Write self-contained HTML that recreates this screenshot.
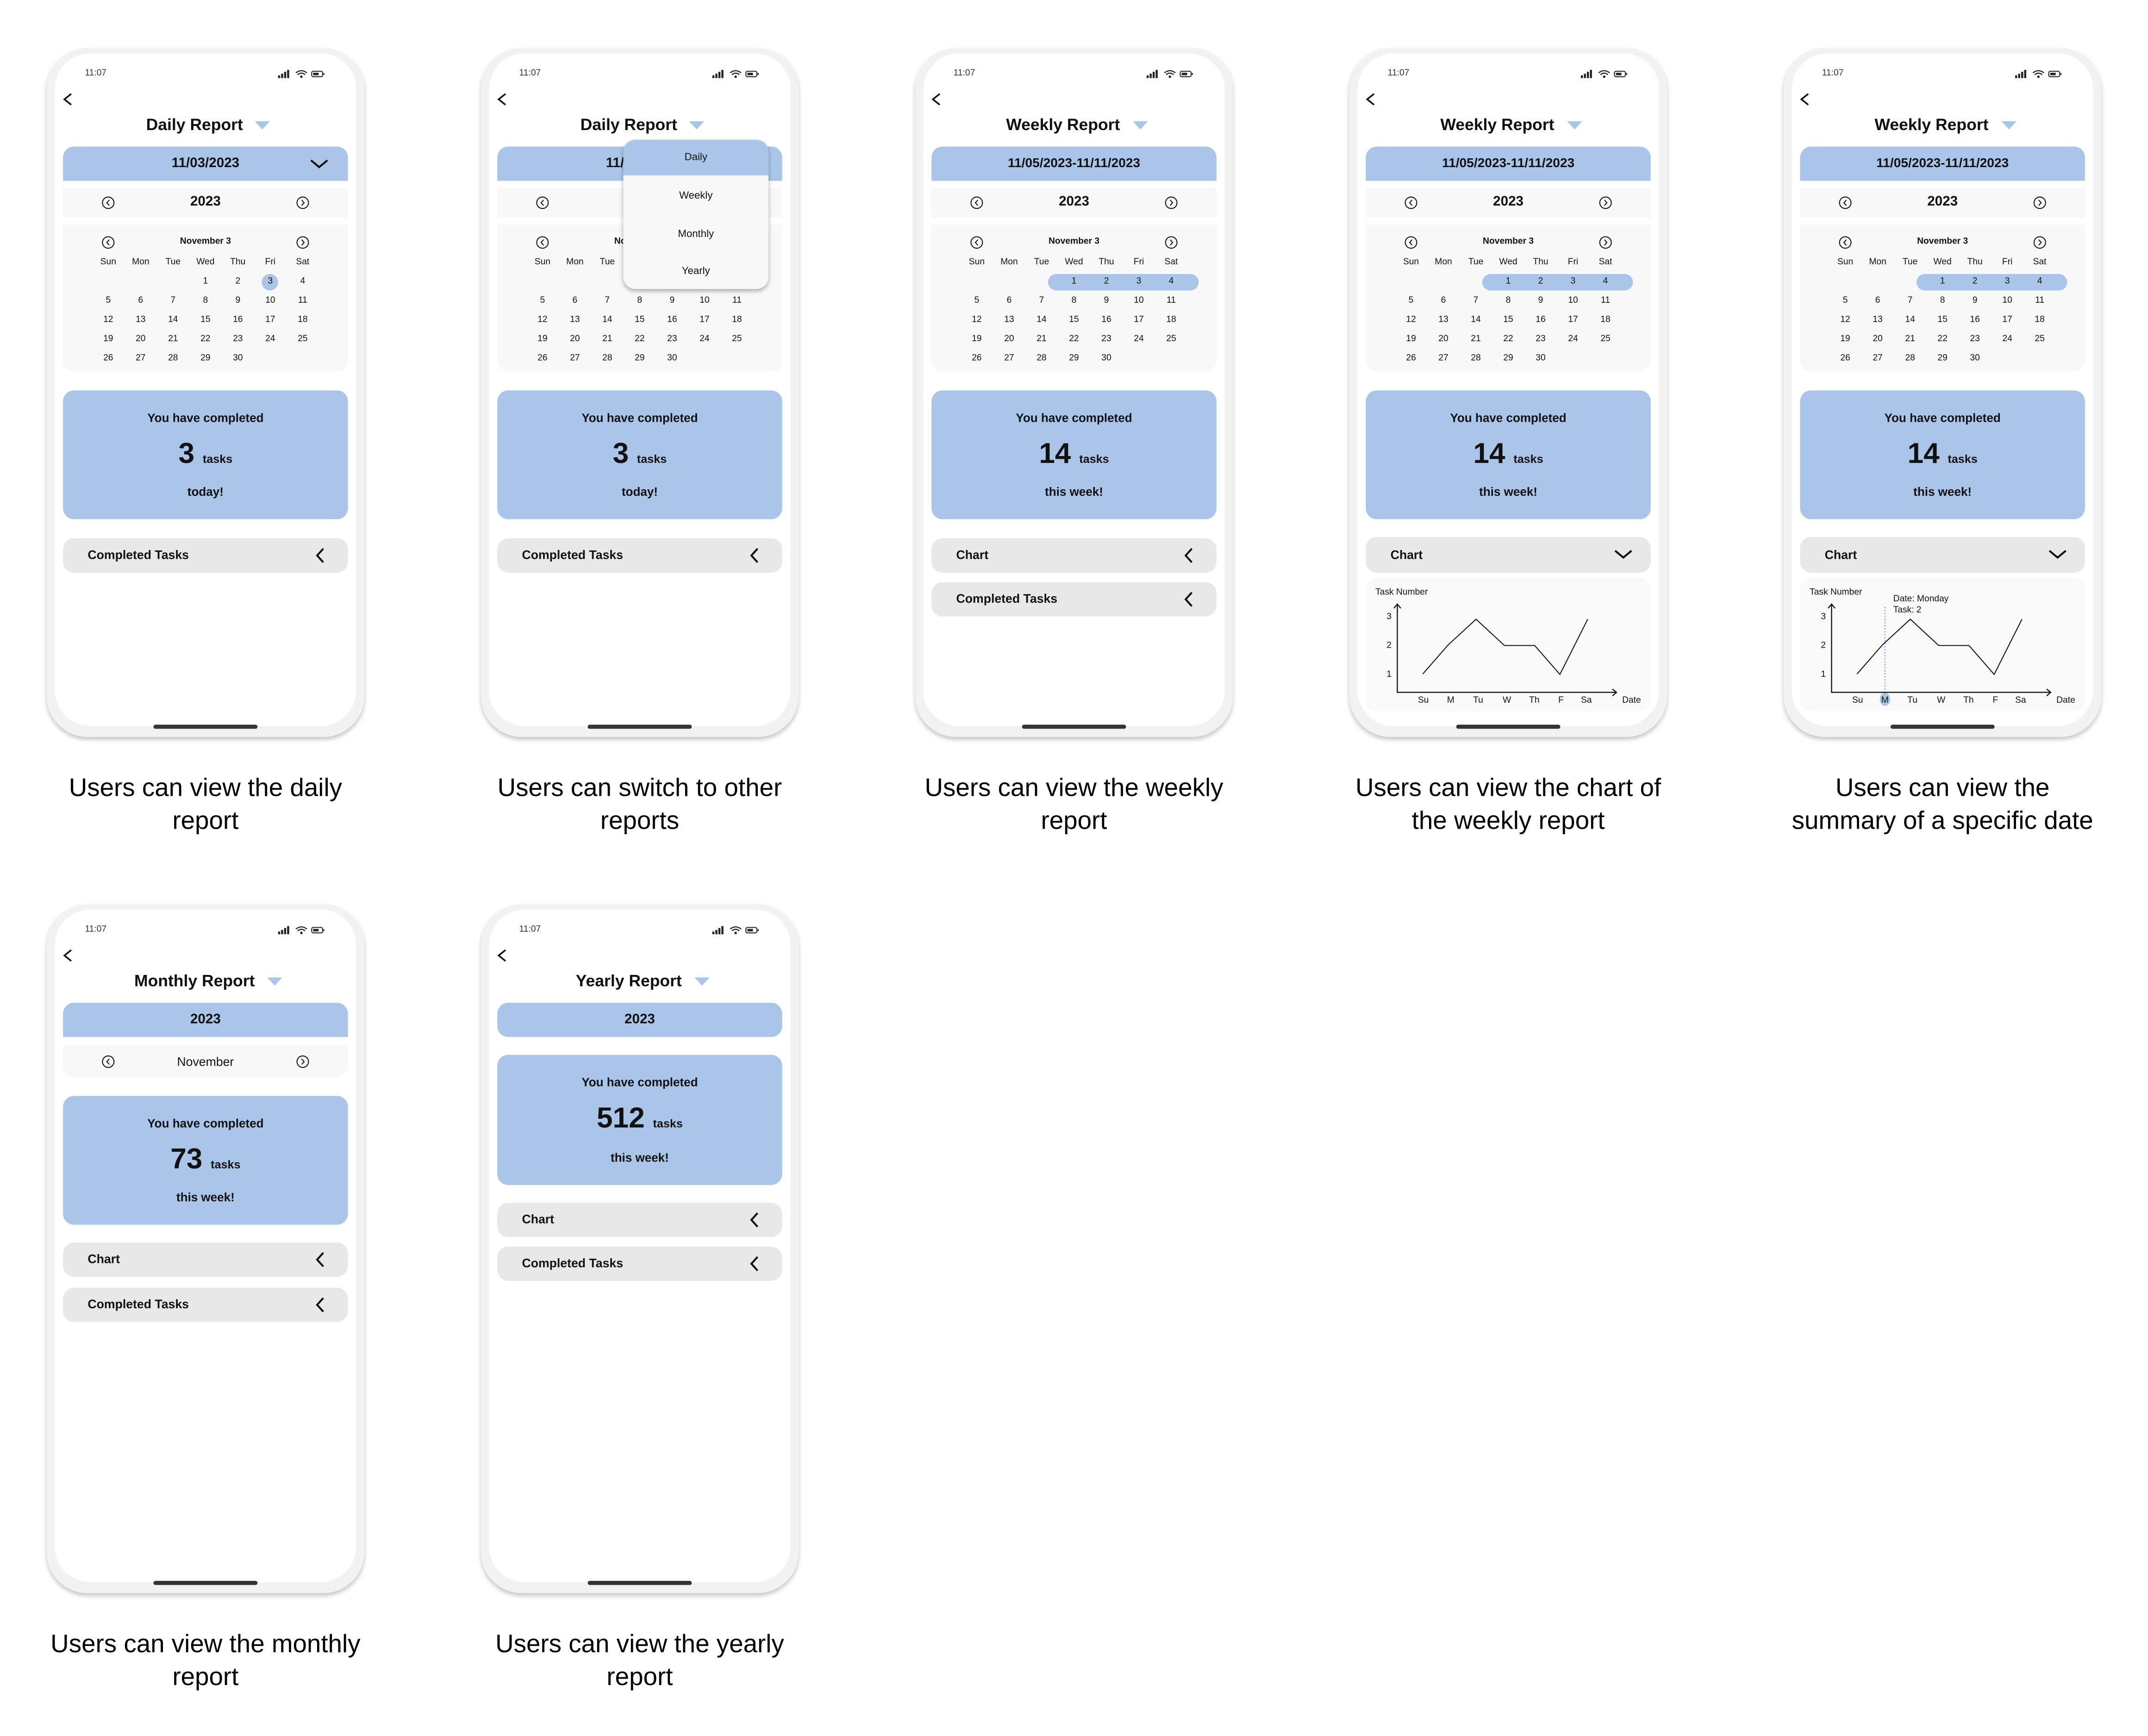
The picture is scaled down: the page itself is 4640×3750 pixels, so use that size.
<!DOCTYPE html>
<html><head><meta charset="utf-8"><style>
html,body{margin:0;padding:0;background:#fff;}
body{width:4640px;height:3750px;overflow:hidden;position:relative;}
#w{position:absolute;left:0;top:0;width:1568px;height:1267px;transform:scale(2.9592);transform-origin:0 0;font-family:"Liberation Sans",Arial,sans-serif;color:#111;}
.ph{position:absolute;width:232px;height:503px;border-radius:30px;background:#f2f2f2;box-shadow:0 2px 3px rgba(0,0,0,.22);}
.scr{position:absolute;left:6px;top:4px;right:6px;bottom:8px;background:#fff;border-radius:26px;}
.ph>*{position:absolute;}
.time{left:28px;top:15px;font-size:6.5px;line-height:8px;color:#333;}
.home{left:78px;top:494px;width:76px;height:3px;border-radius:2px;background:#333;}
.title{left:0;width:236px;top:49px;height:14px;display:flex;justify-content:center;align-items:center;font-weight:bold;font-size:12px;}
.title svg{margin-left:9px;}
.bar{left:12px;width:208px;background:#a9c6e8;text-align:center;font-weight:bold;}
.yr{left:12px;width:208px;top:102px;height:22px;background:#f8f8f8;line-height:22px;text-align:center;font-weight:bold;font-size:10px;}
.cal{left:12px;width:208px;top:129px;height:107px;background:#f8f8f8;border-radius:0 0 8px 8px;}
.cal>*{position:absolute;}
.mt{left:0;width:208px;top:9px;line-height:8px;text-align:center;font-weight:bold;font-size:6.5px;}
.r{left:21.2px;top:0;display:flex;font-size:6.5px;line-height:10px;}
.r span{width:23.67px;text-align:center;display:block;}
.sum{left:12px;width:208px;height:94px;background:#a9c6e8;border-radius:8px;}
.sum>*{position:absolute;left:0;width:208px;text-align:center;font-weight:bold;}
.s1{font-size:8.8px;line-height:10px;}
.s2{font-size:21px;line-height:24px;font-weight:900 !important;}
.s2 small{font-size:8.5px;font-weight:bold;margin-left:6px;}
.gb{left:12px;width:208px;height:25px;background:#e8e8e8;border-radius:8px;font-weight:bold;font-size:9px;line-height:25px;}
.gb span{position:absolute;left:18px;}
.gb svg{position:absolute;left:183px;top:6px;}
.cap{position:absolute;width:340px;text-align:center;font-size:18.5px;line-height:24px;color:#000;}
.dd{left:104px;top:67px;width:106px;height:109px;border-radius:9px;background:#f8f8f8;box-shadow:0 1.5px 3px rgba(0,0,0,.3);overflow:hidden;z-index:5;}
.dd div{position:absolute;left:0;width:106px;text-align:center;font-size:7.5px;background:#f8f8f8;}
.ci{width:10px;height:10px;}
</style></head><body><div id="w">

<!-- PHONE 1 -->
<div class="ph" style="left:34px;top:35px">
<div class="scr"></div>
<div class="time">11:07</div>
<svg style="left:168px;top:14px" width="38" height="10" viewBox="0 0 38 10"><rect x="1" y="6" width="1.5" height="2" fill="#222"/><rect x="3.2" y="4.8" width="1.5" height="3.2" fill="#222"/><rect x="5.4" y="3.4" width="1.5" height="4.6" fill="#222"/><rect x="7.6" y="2" width="1.5" height="6" fill="#222"/><path d="M14 4.2 Q18 1 22 4.2 M15.3 5.5 Q18 3.3 20.7 5.5" fill="none" stroke="#222" stroke-width=".8"/><circle cx="18" cy="7" r=".9" fill="#222"/><rect x="25.5" y="3" width="8" height="4" rx="1.2" fill="none" stroke="#222" stroke-width=".7"/><rect x="26.6" y="4.1" width="4" height="1.8" fill="#222"/><rect x="34" y="4.3" width=".8" height="1.4" fill="#222"/></svg>
<svg style="left:10px;top:32px" width="12" height="12"><path d="M8 1.5 L3 5.5 L8 9.5" fill="none" stroke="#111" stroke-width="1.2"/></svg>
<div class="title">Daily Report<svg width="11" height="7"><polygon points="0,0.5 11,0.5 5.5,6.5" fill="#a9c6e8"/></svg></div>
<div class="bar" style="top:72px;height:25px;line-height:26px;border-radius:8px 8px 0 0;font-size:10px">11/03/2023</div>
<svg style="left:192px;top:80px" width="14" height="9"><path d="M1 2 L7 7 L13 2" fill="none" stroke="#111" stroke-width="1.4"/></svg>
<div class="yr">2023</div>
<svg class="ci" style="left:40px;top:108px" viewBox="0 0 10 10"><circle cx="5" cy="5" r="4.2" fill="none" stroke="#111" stroke-width=".7"/><path d="M5.8 3 L4 5 L5.8 7" fill="none" stroke="#111" stroke-width=".7"/></svg>
<svg class="ci" style="left:182px;top:108px" viewBox="0 0 10 10"><circle cx="5" cy="5" r="4.2" fill="none" stroke="#111" stroke-width=".7"/><path d="M4.2 3 L6 5 L4.2 7" fill="none" stroke="#111" stroke-width=".7"/></svg>
<div class="cal">
<div style="left:145px;top:35.5px;width:12px;height:12px;border-radius:50%;background:#a9c6e8"></div>
<svg class="ci" style="left:28px;top:8px" viewBox="0 0 10 10"><circle cx="5" cy="5" r="4.2" fill="none" stroke="#111" stroke-width=".7"/><path d="M5.8 3 L4 5 L5.8 7" fill="none" stroke="#111" stroke-width=".7"/></svg>
<svg class="ci" style="left:170px;top:8px" viewBox="0 0 10 10"><circle cx="5" cy="5" r="4.2" fill="none" stroke="#111" stroke-width=".7"/><path d="M4.2 3 L6 5 L4.2 7" fill="none" stroke="#111" stroke-width=".7"/></svg>
<div class="mt">November 3</div>
<div class="r" style="top:23px"><span>Sun</span><span>Mon</span><span>Tue</span><span>Wed</span><span>Thu</span><span>Fri</span><span>Sat</span></div>
<div class="r" style="top:37px"><span></span><span></span><span></span><span>1</span><span>2</span><span>3</span><span>4</span></div>
<div class="r" style="top:51px"><span>5</span><span>6</span><span>7</span><span>8</span><span>9</span><span>10</span><span>11</span></div>
<div class="r" style="top:65px"><span>12</span><span>13</span><span>14</span><span>15</span><span>16</span><span>17</span><span>18</span></div>
<div class="r" style="top:79px"><span>19</span><span>20</span><span>21</span><span>22</span><span>23</span><span>24</span><span>25</span></div>
<div class="r" style="top:93px"><span>26</span><span>27</span><span>28</span><span>29</span><span>30</span></div>
</div>
<div class="sum" style="top:250px"><div class="s1" style="top:15px">You have completed</div><div class="s2" style="top:35px">3<small>tasks</small></div><div class="s1" style="top:69px">today!</div></div>
<div class="gb" style="top:358px"><span>Completed Tasks</span><svg width="10" height="13"><path d="M7 1.5 L2.5 6.5 L7 11.5" fill="none" stroke="#111" stroke-width="1.4"/></svg></div>
<div class="home"></div>
</div>

<!-- PHONE 2 -->
<div class="ph" style="left:351px;top:35px">
<div class="scr"></div>
<div class="time">11:07</div>
<svg style="left:168px;top:14px" width="38" height="10" viewBox="0 0 38 10"><rect x="1" y="6" width="1.5" height="2" fill="#222"/><rect x="3.2" y="4.8" width="1.5" height="3.2" fill="#222"/><rect x="5.4" y="3.4" width="1.5" height="4.6" fill="#222"/><rect x="7.6" y="2" width="1.5" height="6" fill="#222"/><path d="M14 4.2 Q18 1 22 4.2 M15.3 5.5 Q18 3.3 20.7 5.5" fill="none" stroke="#222" stroke-width=".8"/><circle cx="18" cy="7" r=".9" fill="#222"/><rect x="25.5" y="3" width="8" height="4" rx="1.2" fill="none" stroke="#222" stroke-width=".7"/><rect x="26.6" y="4.1" width="4" height="1.8" fill="#222"/><rect x="34" y="4.3" width=".8" height="1.4" fill="#222"/></svg>
<svg style="left:10px;top:32px" width="12" height="12"><path d="M8 1.5 L3 5.5 L8 9.5" fill="none" stroke="#111" stroke-width="1.2"/></svg>
<div class="title">Daily Report<svg width="11" height="7"><polygon points="0,0.5 11,0.5 5.5,6.5" fill="#a9c6e8"/></svg></div>
<div class="bar" style="top:72px;height:25px;line-height:26px;border-radius:8px 8px 0 0;font-size:10px">11/03/2023</div>
<div class="yr">2023</div>
<svg class="ci" style="left:40px;top:108px" viewBox="0 0 10 10"><circle cx="5" cy="5" r="4.2" fill="none" stroke="#111" stroke-width=".7"/><path d="M5.8 3 L4 5 L5.8 7" fill="none" stroke="#111" stroke-width=".7"/></svg>
<div class="cal">
<svg class="ci" style="left:28px;top:8px" viewBox="0 0 10 10"><circle cx="5" cy="5" r="4.2" fill="none" stroke="#111" stroke-width=".7"/><path d="M5.8 3 L4 5 L5.8 7" fill="none" stroke="#111" stroke-width=".7"/></svg>
<div class="mt">November 3</div>
<div class="r" style="top:23px"><span>Sun</span><span>Mon</span><span>Tue</span><span>Wed</span><span>Thu</span><span>Fri</span><span>Sat</span></div>
<div class="r" style="top:51px"><span>5</span><span>6</span><span>7</span><span>8</span><span>9</span><span>10</span><span>11</span></div>
<div class="r" style="top:65px"><span>12</span><span>13</span><span>14</span><span>15</span><span>16</span><span>17</span><span>18</span></div>
<div class="r" style="top:79px"><span>19</span><span>20</span><span>21</span><span>22</span><span>23</span><span>24</span><span>25</span></div>
<div class="r" style="top:93px"><span>26</span><span>27</span><span>28</span><span>29</span><span>30</span></div>
</div>
<div class="dd">
<div style="top:0;height:26px;line-height:26px;background:#a9c6e8">Daily</div>
<div style="top:27px;height:27px;line-height:27px">Weekly</div>
<div style="top:55px;height:27px;line-height:27px">Monthly</div>
<div style="top:83px;height:26px;line-height:26px">Yearly</div>
</div>
<div class="sum" style="top:250px"><div class="s1" style="top:15px">You have completed</div><div class="s2" style="top:35px">3<small>tasks</small></div><div class="s1" style="top:69px">today!</div></div>
<div class="gb" style="top:358px"><span>Completed Tasks</span><svg width="10" height="13"><path d="M7 1.5 L2.5 6.5 L7 11.5" fill="none" stroke="#111" stroke-width="1.4"/></svg></div>
<div class="home"></div>
</div>

<!-- PHONE 3 -->
<div class="ph" style="left:668px;top:35px">
<div class="scr"></div>
<div class="time">11:07</div>
<svg style="left:168px;top:14px" width="38" height="10" viewBox="0 0 38 10"><rect x="1" y="6" width="1.5" height="2" fill="#222"/><rect x="3.2" y="4.8" width="1.5" height="3.2" fill="#222"/><rect x="5.4" y="3.4" width="1.5" height="4.6" fill="#222"/><rect x="7.6" y="2" width="1.5" height="6" fill="#222"/><path d="M14 4.2 Q18 1 22 4.2 M15.3 5.5 Q18 3.3 20.7 5.5" fill="none" stroke="#222" stroke-width=".8"/><circle cx="18" cy="7" r=".9" fill="#222"/><rect x="25.5" y="3" width="8" height="4" rx="1.2" fill="none" stroke="#222" stroke-width=".7"/><rect x="26.6" y="4.1" width="4" height="1.8" fill="#222"/><rect x="34" y="4.3" width=".8" height="1.4" fill="#222"/></svg>
<svg style="left:10px;top:32px" width="12" height="12"><path d="M8 1.5 L3 5.5 L8 9.5" fill="none" stroke="#111" stroke-width="1.2"/></svg>
<div class="title">Weekly Report<svg width="11" height="7"><polygon points="0,0.5 11,0.5 5.5,6.5" fill="#a9c6e8"/></svg></div>
<div class="bar" style="top:72px;height:25px;line-height:26px;border-radius:8px 8px 0 0;font-size:9.5px">11/05/2023-11/11/2023</div>
<div class="yr">2023</div>
<svg class="ci" style="left:40px;top:108px" viewBox="0 0 10 10"><circle cx="5" cy="5" r="4.2" fill="none" stroke="#111" stroke-width=".7"/><path d="M5.8 3 L4 5 L5.8 7" fill="none" stroke="#111" stroke-width=".7"/></svg>
<svg class="ci" style="left:182px;top:108px" viewBox="0 0 10 10"><circle cx="5" cy="5" r="4.2" fill="none" stroke="#111" stroke-width=".7"/><path d="M4.2 3 L6 5 L4.2 7" fill="none" stroke="#111" stroke-width=".7"/></svg>
<div class="cal">
<div style="left:85px;top:35.5px;width:110px;height:12px;border-radius:6px;background:#a9c6e8"></div>
<svg class="ci" style="left:28px;top:8px" viewBox="0 0 10 10"><circle cx="5" cy="5" r="4.2" fill="none" stroke="#111" stroke-width=".7"/><path d="M5.8 3 L4 5 L5.8 7" fill="none" stroke="#111" stroke-width=".7"/></svg>
<svg class="ci" style="left:170px;top:8px" viewBox="0 0 10 10"><circle cx="5" cy="5" r="4.2" fill="none" stroke="#111" stroke-width=".7"/><path d="M4.2 3 L6 5 L4.2 7" fill="none" stroke="#111" stroke-width=".7"/></svg>
<div class="mt">November 3</div>
<div class="r" style="top:23px"><span>Sun</span><span>Mon</span><span>Tue</span><span>Wed</span><span>Thu</span><span>Fri</span><span>Sat</span></div>
<div class="r" style="top:37px"><span></span><span></span><span></span><span>1</span><span>2</span><span>3</span><span>4</span></div>
<div class="r" style="top:51px"><span>5</span><span>6</span><span>7</span><span>8</span><span>9</span><span>10</span><span>11</span></div>
<div class="r" style="top:65px"><span>12</span><span>13</span><span>14</span><span>15</span><span>16</span><span>17</span><span>18</span></div>
<div class="r" style="top:79px"><span>19</span><span>20</span><span>21</span><span>22</span><span>23</span><span>24</span><span>25</span></div>
<div class="r" style="top:93px"><span>26</span><span>27</span><span>28</span><span>29</span><span>30</span></div>
</div>
<div class="sum" style="top:250px"><div class="s1" style="top:15px">You have completed</div><div class="s2" style="top:35px">14<small>tasks</small></div><div class="s1" style="top:69px">this week!</div></div>
<div class="gb" style="top:358px"><span>Chart</span><svg width="10" height="13"><path d="M7 1.5 L2.5 6.5 L7 11.5" fill="none" stroke="#111" stroke-width="1.4"/></svg></div>
<div class="gb" style="top:390px"><span>Completed Tasks</span><svg width="10" height="13"><path d="M7 1.5 L2.5 6.5 L7 11.5" fill="none" stroke="#111" stroke-width="1.4"/></svg></div>
<div class="home"></div>
</div>

<!-- PHONE 4 -->
<div class="ph" style="left:985px;top:35px">
<div class="scr"></div>
<div class="time">11:07</div>
<svg style="left:168px;top:14px" width="38" height="10" viewBox="0 0 38 10"><rect x="1" y="6" width="1.5" height="2" fill="#222"/><rect x="3.2" y="4.8" width="1.5" height="3.2" fill="#222"/><rect x="5.4" y="3.4" width="1.5" height="4.6" fill="#222"/><rect x="7.6" y="2" width="1.5" height="6" fill="#222"/><path d="M14 4.2 Q18 1 22 4.2 M15.3 5.5 Q18 3.3 20.7 5.5" fill="none" stroke="#222" stroke-width=".8"/><circle cx="18" cy="7" r=".9" fill="#222"/><rect x="25.5" y="3" width="8" height="4" rx="1.2" fill="none" stroke="#222" stroke-width=".7"/><rect x="26.6" y="4.1" width="4" height="1.8" fill="#222"/><rect x="34" y="4.3" width=".8" height="1.4" fill="#222"/></svg>
<svg style="left:10px;top:32px" width="12" height="12"><path d="M8 1.5 L3 5.5 L8 9.5" fill="none" stroke="#111" stroke-width="1.2"/></svg>
<div class="title">Weekly Report<svg width="11" height="7"><polygon points="0,0.5 11,0.5 5.5,6.5" fill="#a9c6e8"/></svg></div>
<div class="bar" style="top:72px;height:25px;line-height:26px;border-radius:8px 8px 0 0;font-size:9.5px">11/05/2023-11/11/2023</div>
<div class="yr">2023</div>
<svg class="ci" style="left:40px;top:108px" viewBox="0 0 10 10"><circle cx="5" cy="5" r="4.2" fill="none" stroke="#111" stroke-width=".7"/><path d="M5.8 3 L4 5 L5.8 7" fill="none" stroke="#111" stroke-width=".7"/></svg>
<svg class="ci" style="left:182px;top:108px" viewBox="0 0 10 10"><circle cx="5" cy="5" r="4.2" fill="none" stroke="#111" stroke-width=".7"/><path d="M4.2 3 L6 5 L4.2 7" fill="none" stroke="#111" stroke-width=".7"/></svg>
<div class="cal">
<div style="left:85px;top:35.5px;width:110px;height:12px;border-radius:6px;background:#a9c6e8"></div>
<svg class="ci" style="left:28px;top:8px" viewBox="0 0 10 10"><circle cx="5" cy="5" r="4.2" fill="none" stroke="#111" stroke-width=".7"/><path d="M5.8 3 L4 5 L5.8 7" fill="none" stroke="#111" stroke-width=".7"/></svg>
<svg class="ci" style="left:170px;top:8px" viewBox="0 0 10 10"><circle cx="5" cy="5" r="4.2" fill="none" stroke="#111" stroke-width=".7"/><path d="M4.2 3 L6 5 L4.2 7" fill="none" stroke="#111" stroke-width=".7"/></svg>
<div class="mt">November 3</div>
<div class="r" style="top:23px"><span>Sun</span><span>Mon</span><span>Tue</span><span>Wed</span><span>Thu</span><span>Fri</span><span>Sat</span></div>
<div class="r" style="top:37px"><span></span><span></span><span></span><span>1</span><span>2</span><span>3</span><span>4</span></div>
<div class="r" style="top:51px"><span>5</span><span>6</span><span>7</span><span>8</span><span>9</span><span>10</span><span>11</span></div>
<div class="r" style="top:65px"><span>12</span><span>13</span><span>14</span><span>15</span><span>16</span><span>17</span><span>18</span></div>
<div class="r" style="top:79px"><span>19</span><span>20</span><span>21</span><span>22</span><span>23</span><span>24</span><span>25</span></div>
<div class="r" style="top:93px"><span>26</span><span>27</span><span>28</span><span>29</span><span>30</span></div>
</div>
<div class="sum" style="top:250px"><div class="s1" style="top:15px">You have completed</div><div class="s2" style="top:35px">14<small>tasks</small></div><div class="s1" style="top:69px">this week!</div></div>
<div class="gb" style="top:357px;height:26px;line-height:26px"><span>Chart</span><svg style="left:181px;top:8px" width="14" height="9"><path d="M1 2 L7 7 L13 2" fill="none" stroke="#111" stroke-width="1.4"/></svg></div>
<div style="left:12px;top:387px;width:208px;height:97px;background:#f9f9f9;border-radius:8px"></div>
<svg style="left:0;top:0" width="232" height="503" viewBox="0 0 232 503" font-family="Liberation Sans, Arial, sans-serif">
<text x="19" y="399" font-size="6.5" fill="#111">Task Number</text>
<path d="M35 406 V470.4 H195" fill="none" stroke="#111" stroke-width=".8"/>
<path d="M32.5 409 L35 406 L37.5 409 M192 468 L195 470.4 L192 473" fill="none" stroke="#111" stroke-width=".8"/>
<g font-size="6.5" fill="#111" text-anchor="middle"><text x="29" y="417">3</text><text x="29" y="438">2</text><text x="29" y="459">1</text>
<text x="54" y="478">Su</text><text x="74" y="478">M</text><text x="94" y="478">Tu</text><text x="115" y="478">W</text><text x="135" y="478">Th</text><text x="154.5" y="478">F</text><text x="173" y="478">Sa</text><text x="206" y="478">Date</text></g>
<polyline points="53.6,457 71.9,436 92.5,417 113.2,436.2 135.3,436.2 153.7,457.3 174,417" fill="none" stroke="#111" stroke-width=".7"/>
</svg>
<div class="home"></div>
</div>

<!-- PHONE 5 -->
<div class="ph" style="left:1302px;top:35px">
<div class="scr"></div>
<div class="time">11:07</div>
<svg style="left:168px;top:14px" width="38" height="10" viewBox="0 0 38 10"><rect x="1" y="6" width="1.5" height="2" fill="#222"/><rect x="3.2" y="4.8" width="1.5" height="3.2" fill="#222"/><rect x="5.4" y="3.4" width="1.5" height="4.6" fill="#222"/><rect x="7.6" y="2" width="1.5" height="6" fill="#222"/><path d="M14 4.2 Q18 1 22 4.2 M15.3 5.5 Q18 3.3 20.7 5.5" fill="none" stroke="#222" stroke-width=".8"/><circle cx="18" cy="7" r=".9" fill="#222"/><rect x="25.5" y="3" width="8" height="4" rx="1.2" fill="none" stroke="#222" stroke-width=".7"/><rect x="26.6" y="4.1" width="4" height="1.8" fill="#222"/><rect x="34" y="4.3" width=".8" height="1.4" fill="#222"/></svg>
<svg style="left:10px;top:32px" width="12" height="12"><path d="M8 1.5 L3 5.5 L8 9.5" fill="none" stroke="#111" stroke-width="1.2"/></svg>
<div class="title">Weekly Report<svg width="11" height="7"><polygon points="0,0.5 11,0.5 5.5,6.5" fill="#a9c6e8"/></svg></div>
<div class="bar" style="top:72px;height:25px;line-height:26px;border-radius:8px 8px 0 0;font-size:9.5px">11/05/2023-11/11/2023</div>
<div class="yr">2023</div>
<svg class="ci" style="left:40px;top:108px" viewBox="0 0 10 10"><circle cx="5" cy="5" r="4.2" fill="none" stroke="#111" stroke-width=".7"/><path d="M5.8 3 L4 5 L5.8 7" fill="none" stroke="#111" stroke-width=".7"/></svg>
<svg class="ci" style="left:182px;top:108px" viewBox="0 0 10 10"><circle cx="5" cy="5" r="4.2" fill="none" stroke="#111" stroke-width=".7"/><path d="M4.2 3 L6 5 L4.2 7" fill="none" stroke="#111" stroke-width=".7"/></svg>
<div class="cal">
<div style="left:85px;top:35.5px;width:110px;height:12px;border-radius:6px;background:#a9c6e8"></div>
<svg class="ci" style="left:28px;top:8px" viewBox="0 0 10 10"><circle cx="5" cy="5" r="4.2" fill="none" stroke="#111" stroke-width=".7"/><path d="M5.8 3 L4 5 L5.8 7" fill="none" stroke="#111" stroke-width=".7"/></svg>
<svg class="ci" style="left:170px;top:8px" viewBox="0 0 10 10"><circle cx="5" cy="5" r="4.2" fill="none" stroke="#111" stroke-width=".7"/><path d="M4.2 3 L6 5 L4.2 7" fill="none" stroke="#111" stroke-width=".7"/></svg>
<div class="mt">November 3</div>
<div class="r" style="top:23px"><span>Sun</span><span>Mon</span><span>Tue</span><span>Wed</span><span>Thu</span><span>Fri</span><span>Sat</span></div>
<div class="r" style="top:37px"><span></span><span></span><span></span><span>1</span><span>2</span><span>3</span><span>4</span></div>
<div class="r" style="top:51px"><span>5</span><span>6</span><span>7</span><span>8</span><span>9</span><span>10</span><span>11</span></div>
<div class="r" style="top:65px"><span>12</span><span>13</span><span>14</span><span>15</span><span>16</span><span>17</span><span>18</span></div>
<div class="r" style="top:79px"><span>19</span><span>20</span><span>21</span><span>22</span><span>23</span><span>24</span><span>25</span></div>
<div class="r" style="top:93px"><span>26</span><span>27</span><span>28</span><span>29</span><span>30</span></div>
</div>
<div class="sum" style="top:250px"><div class="s1" style="top:15px">You have completed</div><div class="s2" style="top:35px">14<small>tasks</small></div><div class="s1" style="top:69px">this week!</div></div>
<div class="gb" style="top:357px;height:26px;line-height:26px"><span>Chart</span><svg style="left:181px;top:8px" width="14" height="9"><path d="M1 2 L7 7 L13 2" fill="none" stroke="#111" stroke-width="1.4"/></svg></div>
<div style="left:12px;top:387px;width:208px;height:97px;background:#f9f9f9;border-radius:8px"></div>
<svg style="left:0;top:0" width="232" height="503" viewBox="0 0 232 503" font-family="Liberation Sans, Arial, sans-serif">
<text x="19" y="399" font-size="6.5" fill="#111">Task Number</text>
<text x="80" y="404" font-size="6.5" fill="#111">Date: Monday</text>
<text x="80" y="412" font-size="6.5" fill="#111">Task: 2</text>
<ellipse cx="74" cy="475.5" rx="3.8" ry="4.8" fill="#a9c6e8"/>
<path d="M74 408 V471" stroke="#8fb3de" stroke-width=".9" stroke-dasharray="1,1.2"/>
<path d="M35 406 V470.4 H195" fill="none" stroke="#111" stroke-width=".8"/>
<path d="M32.5 409 L35 406 L37.5 409 M192 468 L195 470.4 L192 473" fill="none" stroke="#111" stroke-width=".8"/>
<g font-size="6.5" fill="#111" text-anchor="middle"><text x="29" y="417">3</text><text x="29" y="438">2</text><text x="29" y="459">1</text>
<text x="54" y="478">Su</text><text x="74" y="478">M</text><text x="94" y="478">Tu</text><text x="115" y="478">W</text><text x="135" y="478">Th</text><text x="154.5" y="478">F</text><text x="173" y="478">Sa</text><text x="206" y="478">Date</text></g>
<polyline points="53.6,457 71.9,436 92.5,417 113.2,436.2 135.3,436.2 153.7,457.3 174,417" fill="none" stroke="#111" stroke-width=".7"/>
</svg>
<div class="home"></div>
</div>

<!-- PHONE 6 Monthly -->
<div class="ph" style="left:34px;top:660px">
<div class="scr"></div>
<div class="time">11:07</div>
<svg style="left:168px;top:14px" width="38" height="10" viewBox="0 0 38 10"><rect x="1" y="6" width="1.5" height="2" fill="#222"/><rect x="3.2" y="4.8" width="1.5" height="3.2" fill="#222"/><rect x="5.4" y="3.4" width="1.5" height="4.6" fill="#222"/><rect x="7.6" y="2" width="1.5" height="6" fill="#222"/><path d="M14 4.2 Q18 1 22 4.2 M15.3 5.5 Q18 3.3 20.7 5.5" fill="none" stroke="#222" stroke-width=".8"/><circle cx="18" cy="7" r=".9" fill="#222"/><rect x="25.5" y="3" width="8" height="4" rx="1.2" fill="none" stroke="#222" stroke-width=".7"/><rect x="26.6" y="4.1" width="4" height="1.8" fill="#222"/><rect x="34" y="4.3" width=".8" height="1.4" fill="#222"/></svg>
<svg style="left:10px;top:32px" width="12" height="12"><path d="M8 1.5 L3 5.5 L8 9.5" fill="none" stroke="#111" stroke-width="1.2"/></svg>
<div class="title">Monthly Report<svg width="11" height="7"><polygon points="0,0.5 11,0.5 5.5,6.5" fill="#a9c6e8"/></svg></div>
<div class="bar" style="top:72px;height:25px;line-height:26px;border-radius:8px 8px 0 0;font-size:10px">2023</div>
<div class="yr" style="top:103px;height:23px;line-height:24px;border-radius:0 0 8px 8px;font-weight:normal;font-size:9px">November</div>
<svg class="ci" style="left:40px;top:109.5px" viewBox="0 0 10 10"><circle cx="5" cy="5" r="4.2" fill="none" stroke="#111" stroke-width=".7"/><path d="M5.8 3 L4 5 L5.8 7" fill="none" stroke="#111" stroke-width=".7"/></svg>
<svg class="ci" style="left:182px;top:109.5px" viewBox="0 0 10 10"><circle cx="5" cy="5" r="4.2" fill="none" stroke="#111" stroke-width=".7"/><path d="M4.2 3 L6 5 L4.2 7" fill="none" stroke="#111" stroke-width=".7"/></svg>
<div class="sum" style="top:140px"><div class="s1" style="top:15px">You have completed</div><div class="s2" style="top:35px">73<small>tasks</small></div><div class="s1" style="top:69px">this week!</div></div>
<div class="gb" style="top:247px"><span>Chart</span><svg width="10" height="13"><path d="M7 1.5 L2.5 6.5 L7 11.5" fill="none" stroke="#111" stroke-width="1.4"/></svg></div>
<div class="gb" style="top:280px"><span>Completed Tasks</span><svg width="10" height="13"><path d="M7 1.5 L2.5 6.5 L7 11.5" fill="none" stroke="#111" stroke-width="1.4"/></svg></div>
<div class="home"></div>
</div>

<!-- PHONE 7 Yearly -->
<div class="ph" style="left:351px;top:660px">
<div class="scr"></div>
<div class="time">11:07</div>
<svg style="left:168px;top:14px" width="38" height="10" viewBox="0 0 38 10"><rect x="1" y="6" width="1.5" height="2" fill="#222"/><rect x="3.2" y="4.8" width="1.5" height="3.2" fill="#222"/><rect x="5.4" y="3.4" width="1.5" height="4.6" fill="#222"/><rect x="7.6" y="2" width="1.5" height="6" fill="#222"/><path d="M14 4.2 Q18 1 22 4.2 M15.3 5.5 Q18 3.3 20.7 5.5" fill="none" stroke="#222" stroke-width=".8"/><circle cx="18" cy="7" r=".9" fill="#222"/><rect x="25.5" y="3" width="8" height="4" rx="1.2" fill="none" stroke="#222" stroke-width=".7"/><rect x="26.6" y="4.1" width="4" height="1.8" fill="#222"/><rect x="34" y="4.3" width=".8" height="1.4" fill="#222"/></svg>
<svg style="left:10px;top:32px" width="12" height="12"><path d="M8 1.5 L3 5.5 L8 9.5" fill="none" stroke="#111" stroke-width="1.2"/></svg>
<div class="title">Yearly Report<svg width="11" height="7"><polygon points="0,0.5 11,0.5 5.5,6.5" fill="#a9c6e8"/></svg></div>
<div class="bar" style="top:72px;height:25px;line-height:26px;border-radius:8px;font-size:10px">2023</div>
<div class="sum" style="top:110px;height:95px"><div class="s1" style="top:15px">You have completed</div><div class="s2" style="top:35px">512<small>tasks</small></div><div class="s1" style="top:70px">this week!</div></div>
<div class="gb" style="top:218px"><span>Chart</span><svg width="10" height="13"><path d="M7 1.5 L2.5 6.5 L7 11.5" fill="none" stroke="#111" stroke-width="1.4"/></svg></div>
<div class="gb" style="top:250px"><span>Completed Tasks</span><svg width="10" height="13"><path d="M7 1.5 L2.5 6.5 L7 11.5" fill="none" stroke="#111" stroke-width="1.4"/></svg></div>
<div class="home"></div>
</div>

<!-- CAPTIONS -->
<div class="cap" style="left:-20px;top:563px">Users can view the daily<br>report</div>
<div class="cap" style="left:297px;top:563px">Users can switch to other<br>reports</div>
<div class="cap" style="left:614px;top:563px">Users can view the weekly<br>report</div>
<div class="cap" style="left:931px;top:563px">Users can view the chart of<br>the weekly report</div>
<div class="cap" style="left:1248px;top:563px">Users can view the<br>summary of a specific date</div>
<div class="cap" style="left:-20px;top:1188px">Users can view the monthly<br>report</div>
<div class="cap" style="left:297px;top:1188px">Users can view the yearly<br>report</div>

</div></body></html>
